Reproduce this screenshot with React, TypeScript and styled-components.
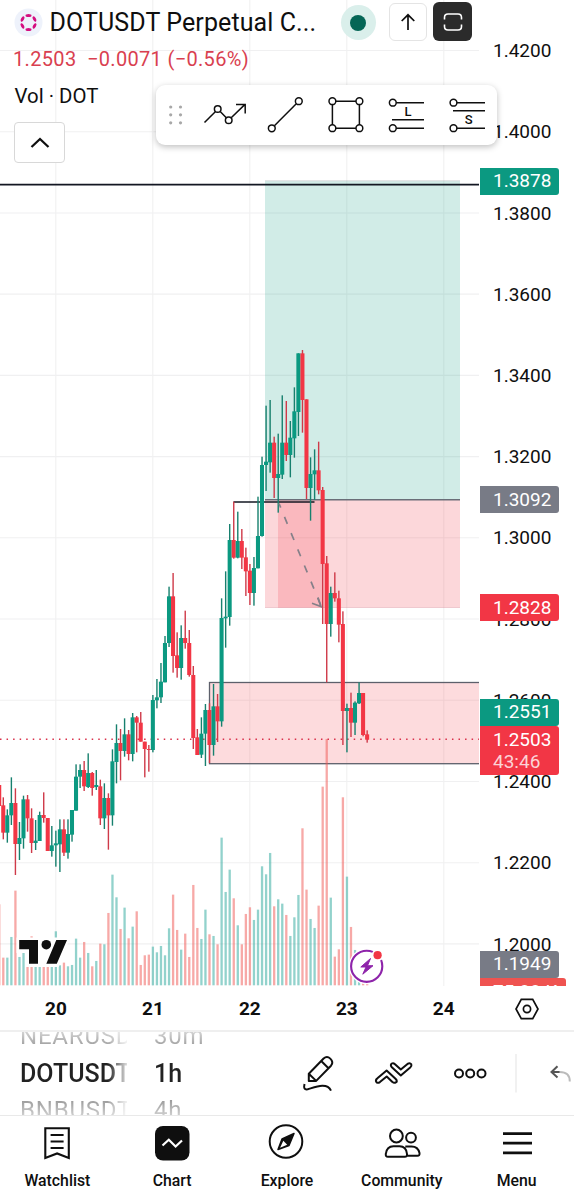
import React from 'react';
import styled, { createGlobalStyle } from 'styled-components';

const Global = createGlobalStyle`
  * { box-sizing: border-box; }
  body { margin: 0; background: #fff; }
  svg { display: block; flex: none; }
`;

type Tone = 'G' | 'R';
/* tone, high, low, body top, body bottom, volume (vertical units are thirds of a pixel) */
type Bar = [Tone, number, number, number, number, number];
type Segment = { base: number; bars: Bar[] };

const segments: Segment[] = [
  {
    base: 1680,
    bars: [
      ['R', 675, 738, 675, 738, 243], ['R', 712, 838, 736, 818, 83], ['G', 748, 848, 766, 818, 83],
      ['G', 652, 795, 729, 766, 145], ['R', 685, 945, 729, 852, 284], ['G', 786, 900, 834, 852, 85],
      ['G', 707, 866, 718, 835, 97], ['R', 705, 815, 718, 775, 62], ['R', 745, 879, 775, 849, 147],
      ['G', 780, 870, 842, 849, 62], ['G', 755, 843, 765, 843, 70], ['R', 697, 788, 765, 774, 70],
      ['R', 774, 873, 774, 873, 75], ['G', 798, 890, 856, 873, 70], ['G', 812, 920, 850, 856, 162],
      ['G', 778, 936, 808, 853, 60], ['R', 778, 888, 808, 878, 68], ['G', 778, 896, 822, 878, 57],
      ['G', 750, 845, 750, 824, 61], ['G', 613, 752, 650, 752, 140], ['G', 613, 684, 630, 650, 83],
      ['R', 603, 693, 630, 679, 130], ['G', 580, 684, 639, 681, 97], ['R', 636, 707, 639, 684, 57],
      ['G', 630, 690, 675, 681, 73], ['R', 659, 795, 679, 775, 125], ['G', 670, 807, 714, 775, 123],
      ['R', 700, 869, 714, 766, 217], ['G', 568, 797, 604, 766, 332], ['G', 493, 670, 549, 606, 264],
      ['R', 507, 661, 549, 573, 169], ['G', 475, 590, 523, 573, 233], ['R', 510, 601, 523, 582, 141],
      ['G', 459, 604, 472, 582, 176], ['R', 468, 577, 472, 488, 222], ['R', 456, 545, 488, 545, 61],
      ['R', 545, 652, 545, 567, 90], ['R', 555, 635, 567, 570, 92], ['G', 405, 577, 420, 570, 116],
      ['G', 357, 445, 412, 421, 99], ['G', 309, 429, 365, 412, 118], ['G', 228, 367, 249, 367, 90],
      ['G', 80, 261, 109, 249, 171], ['R', 39, 338, 109, 288, 272], ['R', 217, 353, 286, 324, 166],
      ['G', 196, 359, 234, 324, 107], ['R', 152, 266, 234, 249, 155], ['R', 210, 350, 249, 345, 85],
      ['R', 318, 567, 345, 534, 301], ['R', 507, 585, 532, 585, 172], ['G', 472, 594, 521, 584, 139],
      ['G', 432, 618, 450, 521, 227], ['R', 430, 609, 450, 555, 153], ['G', 372, 587, 439, 555, 148],
      ['R', 402, 546, 439, 484, 123], ['G', 115, 500, 174, 484, 443], ['G', 34, 263, 170, 175, 280],
    ],
  },
  {
    base: 1590,
    bars: [
      ['G', -18, 287, 30, 261, 347], ['R', -85, 86, 30, 83, 261], ['G', -55, 85, 33, 83, 180],
      ['R', -3, 117, 33, 83, 123], ['R', 53, 198, 82, 124, 214], ['R', 102, 225, 122, 189, 234],
      ['G', 81, 227, 114, 189, 196], ['G', -100, 115, 18, 115, 227],
    ],
  },
  {
    base: 1020,
    bars: [
      ['G', 350, 590, 375, 588, 357], ['G', 197, 453, 365, 375, 333], ['G', 180, 398, 308, 367, 397],
      ['R', 290, 474, 308, 414, 237], ['G', 281, 518, 402, 414, 258], ['G', 166, 417, 308, 404, 245],
      ['R', 183, 363, 308, 345, 211], ['G', 243, 412, 293, 345, 148], ['G', 142, 353, 214, 295, 204],
      ['G', 40, 288, 40, 216, 271], ['R', 30, 278, 40, 180, 471], ['R', 178, 477, 178, 444, 287],
      ['G', 352, 542, 402, 444, 199], ['G', 328, 480, 391, 403, 172], ['R', 305, 463, 391, 451, 239],
    ],
  },
  {
    base: 1590,
    bars: [
      ['R', -129, 282, -120, 102, 596], ['R', 78, 457, 100, 282, 739], ['G', 170, 320, 189, 282, 263],
      ['R', 127, 215, 189, 205, 86], ['R', 182, 337, 205, 284, 108], ['R', 244, 645, 282, 543, 564],
      ['G', 521, 667, 534, 543, 326], ['R', 488, 621, 534, 578, 175], ['G', 514, 615, 518, 578, 106],
      ['G', 457, 522, 489, 520, 31], ['R', 489, 619, 489, 615, 16], ['R', 601, 638, 613, 629, 8],
    ],
  },
];

const STEP = 4.043;
const FIRST_X = -0.8;
const VOLUME_BASE = 985.3;
const candles = segments
  .flatMap(({ base, bars }) =>
    bars.map(([tone, high, low, top, bottom, volume]) => ({
      tone,
      high: (base + high) / 3,
      low: (base + low) / 3,
      top: (base + top) / 3,
      bottom: (base + bottom) / 3,
      volume: volume / 3,
    })),
  )
  .map((c, i) => ({ ...c, x: FIRST_X + i * STEP }));

const days = ['20', '21', '22', '23', '24'];
const prices = ['1.4200', '1.4000', '1.3800', '1.3600', '1.3400', '1.3200', '1.3000', '1.2800', '1.2600', '1.2400', '1.2200', '1.2000'];

const Screen = styled.div`
  width: 574px;
  height: 1199px;
  display: flex;
  flex-direction: column;
  background: #fff;
  color: #0f0f0f;
  font-family: Roboto, 'Liberation Sans', sans-serif;
  overflow: hidden;
`;

const ChartArea = styled.main`
  position: relative;
  height: 986px;
  display: flex;
  overflow: hidden;
`;

const PriceAxis = styled.div`
  position: relative;
  width: 95px;
  padding-top: 10.5px;
`;

const PriceTick = styled.div`
  height: 81.22px;
  display: flex;
  align-items: center;
  padding-left: 14px;
  font-size: 19px;
  line-height: 22px;
`;

const PriceTag = styled.div<{ $top: number; $color: string; $h?: number; $w?: number }>`
  position: absolute;
  left: 1px;
  top: ${(p) => p.$top}px;
  width: ${(p) => p.$w ?? 79}px;
  height: ${(p) => p.$h ?? 27}px;
  padding: 2.5px 0 0 13px;
  border-radius: 0 3px 3px 0;
  background: ${(p) => p.$color};
  color: #fff;
  font-size: 19px;
  line-height: 22px;
`;

const Countdown = styled.div`
  color: rgba(255, 255, 255, 0.78);
`;

const Overlay = styled.div`
  position: absolute;
  left: 0;
  top: 0;
  width: 480px;
  display: flex;
  flex-direction: column;
`;

const TitleRow = styled.header`
  display: flex;
  align-items: center;
  height: 44px;
  padding: 1px 0 0 14px;
`;

const Title = styled.h1`
  margin: 1px 0 0 6.5px;
  width: 291px;
  font-size: 25px;
  font-weight: 400;
  line-height: 30px;
  letter-spacing: 0.1px;
  white-space: nowrap;
`;

const Status = styled.span`
  width: 35px;
  height: 35px;
  display: grid;
  place-items: center;
  border-radius: 50%;
  background: #daefeb;
  &::after {
    content: '';
    width: 16px;
    height: 16px;
    border-radius: 50%;
    background: #056656;
  }
`;

const SquareButton = styled.button<{ $dark?: boolean }>`
  width: ${(p) => (p.$dark ? 39 : 38)}px;
  height: ${(p) => (p.$dark ? 39 : 38)}px;
  margin: 0 0 2px ${(p) => (p.$dark ? 6.5 : 13)}px;
  padding: 0;
  display: grid;
  place-items: center;
  border: ${(p) => (p.$dark ? 'none' : '1px solid #e4e4e4')};
  border-radius: 6px;
  background: ${(p) => (p.$dark ? '#2b2b2b' : '#fff')};
`;

const Quote = styled.div`
  display: flex;
  gap: 10.5px;
  padding: 3px 0 0 13px;
  color: #d93f50;
  font-size: 20px;
  letter-spacing: 0.33px;
  line-height: 24px;
  white-space: pre;
`;

const VolumeLabel = styled.div`
  padding: 13px 0 0 14.5px;
  font-size: 20.4px;
  line-height: 25px;
`;

const Collapse = styled.button`
  width: 51px;
  height: 41px;
  margin: 13px 0 0 14px;
  padding: 0;
  display: grid;
  place-items: center;
  border: 1px solid #d8d8d8;
  border-radius: 4px;
  background: #fff;
`;

const DrawBar = styled.div`
  position: absolute;
  left: 156px;
  top: 85px;
  width: 341px;
  height: 60px;
  border-radius: 9px;
  background: #fff;
  box-shadow: 0 2px 6px rgba(0, 0, 0, 0.25);
`;

const TimeAxis = styled.div`
  height: 44px;
  display: flex;
  align-items: center;
  padding-left: 7.5px;
`;

const Day = styled.div`
  width: 96.95px;
  text-align: center;
  font-size: 19px;
  font-weight: 700;
  line-height: 24px;
  padding-top: 2px;
`;

const AxisSettings = styled.div`
  margin-left: 22px;
  padding-top: 2px;
`;

const Toolbar = styled.section`
  height: 86px;
  display: flex;
  align-items: stretch;
  border-top: 2px solid #efefef;
  border-bottom: 1px solid #e9e9e9;
`;

const Wheel = styled.div<{ $w: number; $left: number; $fade?: boolean }>`
  width: ${(p) => p.$w}px;
  margin-left: ${(p) => p.$left}px;
  height: 83px;
  overflow: hidden;
  display: flex;
  flex-direction: column;
  justify-content: center;
  white-space: nowrap;
  ${(p) => p.$fade && 'mask-image: linear-gradient(90deg, #000 82%, rgba(0,0,0,.15) 100%);'}
`;

const WheelItem = styled.div<{ $active?: boolean; $tail?: boolean }>`
  height: 37px;
  flex: none;
  font-size: ${(p) => (p.$active ? 25 : 24)}px;
  line-height: 37px;
  font-weight: ${(p) => (p.$active ? 500 : 400)};
  letter-spacing: ${(p) => (p.$active ? 0 : 0.8)}px;
  color: transparent;
  background: ${(p) =>
    p.$active
      ? '#222'
      : p.$tail
        ? 'linear-gradient(#999 20%, #ddd 75%)'
        : 'linear-gradient(#ddd 30%, #999 80%)'};
  background-clip: text;
`;

const Tools = styled.div`
  margin-left: 76px;
  flex: 1;
  display: flex;
  align-items: center;
`;

const Tabs = styled.nav`
  flex: 1;
  display: flex;
`;

const Tab = styled.div`
  width: 114.8px;
  display: flex;
  flex-direction: column;
  align-items: center;
  padding-top: 5px;
  font-size: 15.8px;
  font-weight: 500;
  line-height: 20px;
  gap: 8px;
`;

const GREEN = '#0b9981';
const RED = '#f23645';
const ink = { fill: 'none', stroke: '#0f0f0f', strokeWidth: 1.5 };

function Chart() {
  return (
    <svg width="479" height="986" viewBox="0 0 479 986">
      <g stroke="#f0f0f1" strokeWidth="1.1">
        {days.map((d, i) => (
          <path key={d} d={`M${55.8 + i * 97} 0V986`} />
        ))}
        {prices.map((p, i) => (
          <path key={p} d={`M0 ${50.5 + i * 81.22}H479`} />
        ))}
      </g>
      <rect x="265" y="180.5" width="195" height="319" fill="#089981" fillOpacity=".19" />
      <rect x="265" y="500" width="195" height="108" fill="#f23645" fillOpacity=".2" />
      <rect x="278" y="500" width="44" height="108" fill="#f23645" fillOpacity=".19" />
      <path d="M265 499.7H460" stroke="#6a6e78" strokeWidth="1.4" />
      <path d="M265 607.5H460M265 180.8H460" stroke="#cfa6b4" strokeWidth=".6" opacity=".5" />
      <rect x="209.5" y="682.5" width="275" height="81.2" fill="#f23645" fillOpacity=".18" stroke="#5d606b" strokeWidth="1.3" />
      {candles.map((c) => (
        <rect
          key={c.x}
          x={c.x - 1.1}
          width="2.3"
          y={VOLUME_BASE - c.volume}
          height={c.volume}
          fill={c.tone === 'G' ? '#26a69a' : '#ef5350'}
          opacity=".5"
        />
      ))}
      <path d="M0 184.7H479" stroke="#131722" strokeWidth="1.8" />
      <path d="M233.5 502H314.5" stroke="#131722" strokeWidth="1.7" />
      <path d="M0 739.2H479" stroke="#d9304a" strokeWidth="1.5" strokeDasharray="1.5 5.05" />
      {candles.map((c) => (
        <g key={c.x} fill={c.tone === 'G' ? GREEN : RED}>
          <rect x={c.x - 0.65} width="1.4" y={c.high} height={c.low - c.high} fill={c.tone === 'G' ? '#17806e' : '#cf3a49'} />
          <rect x={c.x - 2.02} width="4.06" y={c.top} height={c.bottom - c.top} />
        </g>
      ))}
      <g fill="none" stroke="#858089" strokeWidth="1.7">
        <path d="M279 503.5L321 606" strokeDasharray="7.5 10" strokeDashoffset="3" />
        <path d="M312 603.3L321 606.5L318 597.5" />
      </g>
      <g transform="translate(18 938)">
        <path d="M1 2H48.5L39 26.5H10.5V12.5H1Z" fill="#fff" stroke="#fff" strokeWidth="5" />
        <path d="M1.2 2H20V25.7H11V11.3H1.2ZM38.3 2H49L38.8 25.7H28.3Z" fill="#0f0f0f" />
        <circle cx="28.3" cy="6.7" r="4.8" fill="#0f0f0f" />
      </g>
      <g>
        <circle cx="366.7" cy="966.3" r="18" fill="#fff" />
        <circle cx="366.7" cy="966.3" r="15.6" fill="#fff" stroke="#8e24aa" strokeWidth="2.1" />
        <path d="M370.5 958.5L360.8 967H366L362.8 974.2L373 965.7H367.5Z" fill="#8e24aa" stroke="#8e24aa" strokeWidth="1" strokeLinejoin="round" />
        <circle cx="377.6" cy="955.2" r="6" fill="#fff" />
        <circle cx="377.6" cy="955.2" r="4.1" fill={RED} />
      </g>
    </svg>
  );
}

function DrawingTools() {
  return (
    <DrawBar>
      <svg width="341" height="60" viewBox="156 85 341 60">
        <g fill="#a8a8a8">
          {[107, 114.8, 122.8].map((y) => (
            <React.Fragment key={y}>
              <circle cx="170.7" cy={y} r="1.6" />
              <circle cx="180.5" cy={y} r="1.6" />
            </React.Fragment>
          ))}
        </g>
        <g {...ink}>
          <path d="M204.5 122.5L215.3 111.7M220.2 111.4L226.3 117.7M231.2 117.7L245 104.4M236 104.5H245.2V113.5" />
          <circle cx="217.7" cy="109" r="3.3" />
          <circle cx="228.7" cy="120.3" r="3.3" />
          <path d="M274.4 125.7L296.3 103.7" />
          <circle cx="271.8" cy="128.3" r="3.4" />
          <circle cx="298.8" cy="101.2" r="3.4" />
          <path d="M335.7 101.2H356M335.7 128.2H356M332.4 104.5V125M359.4 104.5V125" />
          {[332.4, 359.4].map((x) => [101.2, 128.2].map((y) => <circle key={`${x}-${y}`} cx={x} cy={y} r="3.4" />))}
          <path d="M396.2 102.7H424M392 119.8H424M396.2 128.2H424" />
          <circle cx="392.8" cy="102.7" r="3.4" />
          <circle cx="392.8" cy="128.2" r="3.4" />
          <path d="M456.8 102.7H485M453 110.7H485M456.8 128.2H485" />
          <circle cx="453.5" cy="102.7" r="3.4" />
          <circle cx="453.5" cy="128.2" r="3.4" />
        </g>
        <g fontFamily="Roboto, sans-serif" fontWeight="500" fontSize="13" textAnchor="middle" fill="#0f0f0f">
          <text x="408" y="116.3">L</text>
          <text x="468.7" y="124.3">S</text>
        </g>
      </svg>
    </DrawBar>
  );
}

export default function App() {
  return (
    <Screen>
      <Global />
      <ChartArea>
        <Chart />
        <PriceAxis>
          {prices.map((p) => (
            <PriceTick key={p}>{p}</PriceTick>
          ))}
          <PriceTag $top={167.5} $color={GREEN}>1.3878</PriceTag>
          <PriceTag $top={486.4} $color="#787b86">1.3092</PriceTag>
          <PriceTag $top={594} $color={RED}>1.2828</PriceTag>
          <PriceTag $top={698.5} $color={GREEN}>1.2551</PriceTag>
          <PriceTag $top={726} $h={49} $color={RED}>
            1.2503
            <Countdown>43:46</Countdown>
          </PriceTag>
          <PriceTag $top={978} $w={86} $color="#ef5350">75.88 K</PriceTag>
          <PriceTag $top={950.5} $color="#787b86">1.1949</PriceTag>
        </PriceAxis>
        <Overlay>
          <TitleRow>
            <svg width="29" height="29" viewBox="-14.5 -14.5 29 29">
              <circle r="14" fill="#eef2fb" />
              {[0, 60, 120, 180, 240, 300].map((a) => (
                <ellipse key={a} cx="0" cy="-6.9" rx="3" ry="1.5" fill="#d40f80" transform={`rotate(${a})`} />
              ))}
            </svg>
            <Title>DOTUSDT Perpetual C...</Title>
            <Status />
            <SquareButton>
              <svg width="20" height="20" viewBox="0 0 20 20" {...ink} strokeWidth="1.7">
                <path d="M10 18V3M3.7 9L10 2.8L16.3 9" />
              </svg>
            </SquareButton>
            <SquareButton $dark>
              <svg width="20" height="20" viewBox="0 0 20 20" fill="none" stroke="#fff" strokeWidth="1.6">
                <path d="M1.5 7.5V5.5Q1.5 2 5 2H15Q18.5 2 18.5 5.5V7.5M1.5 12.5V14.5Q1.5 18 5 18H15Q18.5 18 18.5 14.5V12.5" />
              </svg>
            </SquareButton>
          </TitleRow>
          <Quote>
            <span>1.2503</span>
            <span>−0.0071 (−0.56%)</span>
          </Quote>
          <VolumeLabel>Vol · DOT</VolumeLabel>
          <Collapse>
            <svg width="20" height="12" viewBox="0 0 20 12" fill="none" stroke="#0f0f0f" strokeWidth="2.3">
              <path d="M1.5 10L10 2L18.5 10" />
            </svg>
          </Collapse>
        </Overlay>
        <DrawingTools />
      </ChartArea>
      <TimeAxis>
        {days.map((d) => (
          <Day key={d}>{d}</Day>
        ))}
        <AxisSettings>
          <svg width="26" height="24" viewBox="0 0 26 24" {...ink} strokeWidth="1.7">
            <path d="M7.3 2.3H18.7L24 12L18.7 21.7H7.3L2 12Z" />
            <circle cx="13" cy="12" r="3.6" />
          </svg>
        </AxisSettings>
      </TimeAxis>
      <Toolbar>
        <Wheel $w={107} $left={20} $fade>
          <WheelItem>NEARUSDT</WheelItem>
          <WheelItem $active>DOTUSDT</WheelItem>
          <WheelItem $tail>BNBUSDT</WheelItem>
        </Wheel>
        <Wheel $w={70} $left={27}>
          <WheelItem>30m</WheelItem>
          <WheelItem $active>1h</WheelItem>
          <WheelItem $tail>4h</WheelItem>
        </Wheel>
        <Tools>
          <svg width="274" height="50" viewBox="300 1048.5 274 50" fill="none" stroke="#0f0f0f" strokeWidth="2" strokeLinejoin="round">
            <path d="M308.8 1080.4V1073.3L323.6 1058Q327 1054.9 330.3 1058.1Q334 1061.7 331 1065.2L316.2 1080.4ZM308.8 1073.3L316.2 1080.4M321.2 1060.5L328.5 1067.7" />
            <path d="M304.5 1083.5Q303 1089.8 307.7 1088.8C315 1086.7 327 1081.5 331 1090.2" strokeLinecap="butt" />
            <path d="M377.4 1077.8L386.6 1070L395.5 1078.3Q398.2 1081 395.4 1082.2Q393.7 1082.7 392.4 1081.4L386.7 1076L379.9 1081.6Q377.4 1083.3 376.2 1081.2Q375.3 1079.5 377.4 1077.8Z" />
            <path d="M410.2 1067.1L400.8 1075L391.6 1066.5Q390 1064.3 391.8 1063Q393.3 1062.1 395 1063.7L400.8 1069L407.5 1063.4Q410 1061.8 411.3 1063.8Q412 1065.5 410.2 1067.1Z" />
            <circle cx="459" cy="1073" r="4" />
            <circle cx="470.2" cy="1073" r="4" />
            <circle cx="481.5" cy="1073" r="4" />
            <path d="M516 1053.5V1092" stroke="#e8e8e8" strokeWidth="1.2" />
            <path d="M557.5 1065.8L551.5 1071.4L557.5 1077M551.5 1071.4H560" stroke="#555" strokeLinejoin="miter" />
            <path d="M559.5 1071.4Q569.8 1071.3 569.8 1081" stroke="#bbb" />
          </svg>
        </Tools>
      </Toolbar>
      <Tabs>
        <Tab>
          <svg width="44" height="42" viewBox="35.4 1121 44 42" fill="none" stroke="#0f0f0f" strokeWidth="2.1">
            <path d="M45.7 1128.2H69.2V1158L57.5 1153.4L45.7 1158ZM51 1135H64M51 1141.5H64M51 1148H64" />
          </svg>
          Watchlist
        </Tab>
        <Tab>
          <svg width="44" height="42" viewBox="150 1121 44 42">
            <rect x="155" y="1126" width="34.5" height="34.5" rx="8" fill="#0f0f0f" />
            <path d="M162.5 1145.5L168.8 1139.7L175.6 1146.5L182 1140.5" fill="none" stroke="#fff" strokeWidth="2.2" />
          </svg>
          Chart
        </Tab>
        <Tab>
          <svg width="44" height="42" viewBox="265.5 1121 44 42">
            <circle cx="286.5" cy="1141.5" r="16.3" fill="none" stroke="#0f0f0f" strokeWidth="2" />
            <path d="M294.5 1133.5L282.5 1139L278.5 1149.5L289.5 1145.5Z" fill="#0f0f0f" stroke="#0f0f0f" strokeWidth="1.5" strokeLinejoin="round" />
            <path d="M283.8 1140.8L280.6 1147.7L287.7 1144.8Z" fill="#fff" />
          </svg>
          Explore
        </Tab>
        <Tab>
          <svg width="44" height="42" viewBox="380 1121 44 42" fill="none" stroke="#0f0f0f" strokeWidth="2">
            <circle cx="396.4" cy="1136" r="6.4" />
            <circle cx="411" cy="1137.6" r="4.9" />
            <path d="M388 1156.7Q385.4 1156.7 385.8 1154C386.4 1149 389 1146.3 393.4 1146.3H399.6C404 1146.3 406.5 1149 407 1154Q407.3 1156.7 404.8 1156.7ZM405.3 1146.5H411.6C416 1146.5 418.5 1148.6 419.5 1153Q420 1155.7 417.3 1155.7H407" />
          </svg>
          Community
        </Tab>
        <Tab>
          <svg width="44" height="42" viewBox="495 1121 44 42" stroke="#0f0f0f" strokeWidth="2.7">
            <path d="M503 1133.7H532M503 1143.2H532M503 1152.8H532" />
          </svg>
          Menu
        </Tab>
      </Tabs>
    </Screen>
  );
}
